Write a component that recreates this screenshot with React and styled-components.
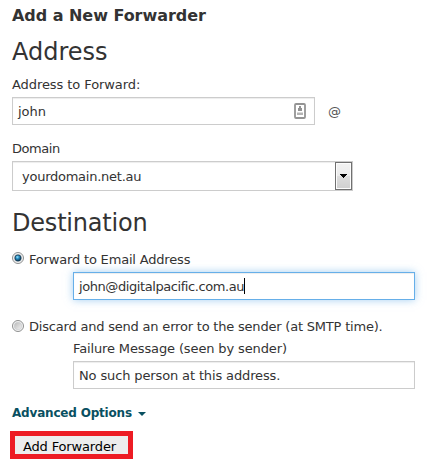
import styled, { createGlobalStyle } from 'styled-components'
import { useState } from 'react'

const GlobalStyle = createGlobalStyle`
  * {
    box-sizing: border-box;
  }

  body {
    margin: 0;
    background: #fff;
    color: #333;
    font-family: Verdana, "DejaVu Sans", sans-serif;
    font-size: 13px;
    line-height: 20px;
    overflow: hidden;
  }
`

const Page = styled.form`
  width: 433px;
  height: 467px;
  padding: 6px 18px 0 12px;
  white-space: nowrap;
`

const Title = styled.h3`
  height: 20px;
  margin: 0;
  font-size: 16px;
  line-height: 20px;
  letter-spacing: ${props => props.$spacing};
`

const Heading = styled.h2`
  height: 32px;
  margin: ${props => props.$top} 0 0;
  font-size: 24px;
  font-weight: normal;
  line-height: 32px;
  letter-spacing: ${props => props.$spacing};
`

const Label = styled.label`
  display: block;
  height: 20px;
  margin: ${props => props.$margin || '0'};
  letter-spacing: ${props => props.$spacing || '0'};
`

const Row = styled.div`
  display: flex;
  align-items: center;
`

const Field = styled.div`
  display: flex;
  align-items: center;
  width: ${props => props.$width};
  height: 28px;
  padding: 1px 5px 0;
  border: 1px solid #ccc;
  box-shadow: inset 0 1px 1px rgba(0, 0, 0, 0.075);
  background: #fff;
  letter-spacing: ${props => props.$spacing || '0'};

  ${props => props.$focused && `
    border-color: #66afe9;
    box-shadow: inset 0 1px 1px rgba(0, 0, 0, 0.075), 0 0 8px rgba(102, 175, 233, 0.6);
  `}
`

const Caret = styled.span`
  width: 1px;
  height: 16px;
  margin-bottom: 2px;
  background: #000;
`

const ContactIcon = styled.svg`
  display: block;
  margin: 0 3px 1px auto;
`

const At = styled.span`
  margin: 2px 0 0 13px;
  color: #555;
`

const Select = styled(Field)`
  height: 30px;
  padding: 0 0 0 9px;
`

const SelectText = styled.span`
  padding-top: 2px;
`

const SelectArrow = styled.span`
  display: flex;
  align-items: center;
  justify-content: center;
  width: 17px;
  height: 28px;
  margin-left: auto;
  border: 1px solid #707070;
  box-shadow: inset 0 0 0 1px #fcfcfc;
  background: linear-gradient(#f2f2f2, #ebebeb 50%, #dddddd 50%, #cfcfcf);
`

const Option = styled.div`
  display: flex;
  height: 20px;
  margin-top: ${props => props.$top};
  letter-spacing: ${props => props.$spacing};
  cursor: default;
`

const RadioDot = styled.svg`
  flex: none;
  margin: ${props => props.$top} 5px 0 0;
`

const Nested = styled.div`
  padding: ${props => props.$top || '0'} 0 0 61px;
`

const Advanced = styled.div`
  display: flex;
  align-items: center;
  height: 20px;
  margin-top: 14px;
  color: #095061;
  font-weight: bold;
  font-size: 12px;
  letter-spacing: ${props => props.$spacing};
`

const Triangle = styled.svg`
  margin: 1px 0 0 6px;
`

const SubmitBtn = styled.button`
  display: block;
  width: 123px;
  height: 28px;
  margin: 8px 0 0 -2px;
  padding: 2px 0 0 8px;
  border: 5px solid #ed1c24;
  background: #ededed;
  color: #000;
  font: inherit;
  line-height: 18px;
  text-align: left;
  letter-spacing: ${props => props.$spacing};
`

function Radio({ checked, top }) {
  return (
    <RadioDot $top={top} width="12" height="12" viewBox="0 0 12 12">
      <defs>
        <radialGradient id="blueDot" cx="40%" cy="35%" r="65%">
          <stop offset="0" stopColor="#9be4fb" />
          <stop offset="0.4" stopColor="#2b93c8" />
          <stop offset="1" stopColor="#07304d" />
        </radialGradient>
        <linearGradient id="greyDot" x1="0" y1="0" x2="1" y2="1">
          <stop offset="0" stopColor="#b9b9b9" />
          <stop offset="1" stopColor="#f3f3f3" />
        </linearGradient>
      </defs>
      <circle cx="6" cy="6" r="5.5" fill="#f6f6f6" stroke="#8e8f8f" />
      <circle cx="6" cy="6" r="3.8" fill="url(#greyDot)" stroke="#c4c8cb" strokeWidth="0.6" />
      {checked && <circle cx="6" cy="6" r="3.1" fill="url(#blueDot)" stroke="#143d59" strokeWidth="0.8" />}
    </RadioDot>
  )
}

export default function App() {
  let [mode, setMode] = useState('forward')

  return (
    <>
      <GlobalStyle />
      <Page onSubmit={(e) => { e.preventDefault() }}>
        <Title $spacing="-0.04px">Add a New Forwarder</Title>

        <Heading $top="10px" $spacing="0">Address</Heading>
        <Label $margin="7px 0 2px" $spacing="-0.08px">Address to Forward:</Label>
        <Row>
          <Field $width="303px">
            john
            <ContactIcon width="12" height="16" viewBox="0 0 12 16">
              <rect x="1" y="1" width="10" height="14" rx="1" fill="#fff" stroke="#949494" strokeWidth="1.8" />
              <path d="M5 3h2v2h1v3H4V5h1z" fill="#929292" />
              <path d="M3 9.5h6v2.5H3z" fill="#b4b4b4" />
            </ContactIcon>
          </Field>
          <At>@</At>
        </Row>

        <Label $margin="14px 0 2px" $spacing="-0.45px">Domain</Label>
        <Select $width="341px" $spacing="-0.25px">
          <SelectText>yourdomain.net.au</SelectText>
          <SelectArrow>
            <svg width="7" height="4" viewBox="0 0 7 4" shapeRendering="crispEdges">
              <path d="M0 0h7v1H6v1H5v1H4v1H3V3H2V2H1V1H0z" fill="#000" />
            </svg>
          </SelectArrow>
        </Select>

        <Heading $top="16px" $spacing="-0.2px">Destination</Heading>
        <Option $top="11px" $spacing="-0.18px" onClick={() => { setMode('forward') }}>
          <Radio top="2px" checked={mode == 'forward'} />
          Forward to Email Address
        </Option>
        <Nested $top="2px">
          <Field $width="342px" $spacing="-0.42px" $focused>
            john@digitalpacific.com.au
            <Caret />
          </Field>
        </Nested>

        <Option $top="17px" $spacing="-0.2px" onClick={() => { setMode('discard') }}>
          <Radio top="3px" checked={mode == 'discard'} />
          Discard and send an error to the sender (at SMTP time).
        </Option>
        <Nested>
          <Label $margin="2px 0 2px" $spacing="-0.13px">Failure Message (seen by sender)</Label>
          <Field $width="342px" $spacing="-0.13px">No such person at this address.</Field>
        </Nested>

        <Advanced $spacing="-0.19px">
          Advanced Options
          <Triangle width="8" height="4" viewBox="0 0 8 4">
            <path d="M0 0h8L4 4z" fill="#095061" />
          </Triangle>
        </Advanced>
        <SubmitBtn type="submit" $spacing="-0.15px">Add Forwarder</SubmitBtn>
      </Page>
    </>
  )
}
